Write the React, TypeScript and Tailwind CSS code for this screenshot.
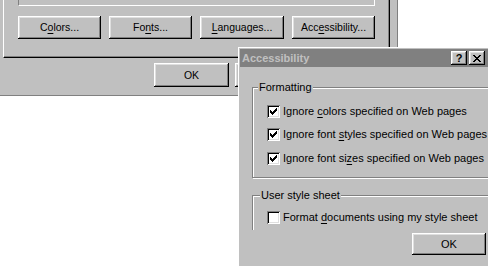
import type { ReactNode } from 'react'

const raised =
  'bg-[#c0c0c0] shadow-[inset_-1px_-1px_#000,inset_1px_1px_#fff,inset_-2px_-2px_#808080,inset_2px_2px_#dfdfdf]'

function Btn({ children, className = '' }: { children: ReactNode; className?: string }) {
  return (
    <div className={`${raised} flex items-center justify-center ${className}`}>
      <span className="leading-none">{children}</span>
    </div>
  )
}

function U({ children }: { children: ReactNode }) {
  return <span className="underline underline-offset-[2px]">{children}</span>
}

function CheckBox({ checked }: { checked: boolean }) {
  return (
    <div className="flex h-[13px] w-[13px] shrink-0 items-start justify-start bg-white pl-[3px] pt-[3px] shadow-[inset_1px_1px_#808080,inset_-1px_-1px_#fff,inset_2px_2px_#000,inset_-2px_-2px_#dfdfdf]">
      {checked && (
        <svg width="7" height="7" viewBox="0 0 7 7" shapeRendering="crispEdges">
          <path
            fill="#000"
            d="M6 0h1v1h-1z M5 1h2v1h-2z M0 2h1v1h-1z M4 2h3v1h-3z M0 3h2v1h-2z M3 3h3v1h-3z M0 4h5v1h-5z M1 5h3v1h-3z M2 6h1v1h-1z"
          />
        </svg>
      )}
    </div>
  )
}

function Row({ checked, children, className = '' }: { checked: boolean; children: ReactNode; className?: string }) {
  return (
    <div className={`flex h-[13px] items-center gap-[3px] ${className}`}>
      <CheckBox checked={checked} />
      <span className="whitespace-nowrap leading-[13px]">{children}</span>
    </div>
  )
}

function BackDialog() {
  return (
    <div className="absolute left-0 top-0 h-[96px] w-[398px] border-b border-r border-[#808080] bg-[#c0c0c0] text-[10.5px]">
      <div className="ml-[3px] h-[58px] w-[387px] border-b border-l border-r border-b-black border-l-white border-r-black shadow-[inset_-1px_-1px_#808080]">
        <div className="ml-[14px] h-[6px] w-[357px] border-b border-l border-r border-b-white border-l-[#808080] border-r-white" />
        <div className="ml-[14px] mt-[10px] flex gap-2">
          <Btn className="h-[23px] w-[83px]">
            C<U>o</U>lors...
          </Btn>
          <Btn className="h-[23px] w-[83px]">
            Fo<U>n</U>ts...
          </Btn>
          <Btn className="h-[23px] w-[84px]">
            <U>L</U>anguages...
          </Btn>
          <Btn className="h-[23px] w-[83px]">
            Acc<U>e</U>ssibility...
          </Btn>
        </div>
      </div>
      <div className="ml-[154px] mt-[5px] flex gap-[6px]">
        <Btn className="h-[24px] w-[75px]">OK</Btn>
        <Btn className="h-[24px] w-[75px]">Cancel</Btn>
      </div>
    </div>
  )
}

function FrontDialog() {
  return (
    <div className="absolute left-[238px] top-[47px] h-[222px] w-[251px] overflow-hidden border-l border-t border-white bg-[#c0c0c0] p-[1px]">
      <div className="flex h-[18px] items-center justify-between bg-[#808080] pl-[2px] pr-[3px]">
        <span className="text-[11px] font-bold leading-none text-[#c0c0c0]">Accessibility</span>
        <div className="flex gap-[2px]">
          <div className={`${raised} flex h-[14px] w-[16px] items-center justify-center`}>
            <span className="text-[11px] font-bold leading-none">?</span>
          </div>
          <div className={`${raised} flex h-[14px] w-[16px] items-center justify-center`}>
            <svg width="8" height="7" viewBox="0 0 8 7" shapeRendering="crispEdges">
              <path
                fill="#000"
                d="M0 0h2v1h-2z M6 0h2v1h-2z M1 1h2v1h-2z M5 1h2v1h-2z M2 2h4v1h-4z M3 3h2v1h-2z M2 4h4v1h-4z M1 5h2v1h-2z M5 5h2v1h-2z M0 6h2v1h-2z M6 6h2v1h-2z"
              />
            </svg>
          </div>
        </div>
      </div>

      <div className="relative ml-[12px] mt-[20px] h-[91px] w-[245px] border border-[#808080] pl-[14px] pt-[17px] shadow-[inset_1px_1px_#fff,1px_1px_#fff]">
        <span className="absolute left-[5px] top-[-7px] bg-[#c0c0c0] px-[1px] leading-[13px]">Formatting</span>
        <Row checked>
          Ignore <U>c</U>olors specified on Web pages
        </Row>
        <Row checked className="mt-[10px]">
          Ignore font <U>s</U>tyles specified on Web pages
        </Row>
        <Row checked className="mt-[11px]">
          Ignore font si<U>z</U>es specified on Web pages
        </Row>
      </div>

      <div className="relative ml-[12px] mt-[17px] h-[35px] w-[245px] border-l border-t border-[#808080] pl-[14px] pt-[15px] shadow-[inset_1px_1px_#fff]">
        <span className="absolute left-[7px] top-[-7px] bg-[#c0c0c0] px-[1px] leading-[13px]">User style sheet</span>
        <Row checked={false}>
          Format <U>d</U>ocuments using my style sheet
        </Row>
      </div>

      <div className="ml-[172px] mt-[3px]">
        <Btn className="h-[22px] w-[74px]">OK</Btn>
      </div>
    </div>
  )
}

export default function App() {
  return (
    <div className="relative h-[266px] w-[488px] overflow-hidden bg-white font-['Liberation_Sans',Arial,sans-serif] text-[11px] text-black">
      <BackDialog />
      <FrontDialog />
    </div>
  )
}
